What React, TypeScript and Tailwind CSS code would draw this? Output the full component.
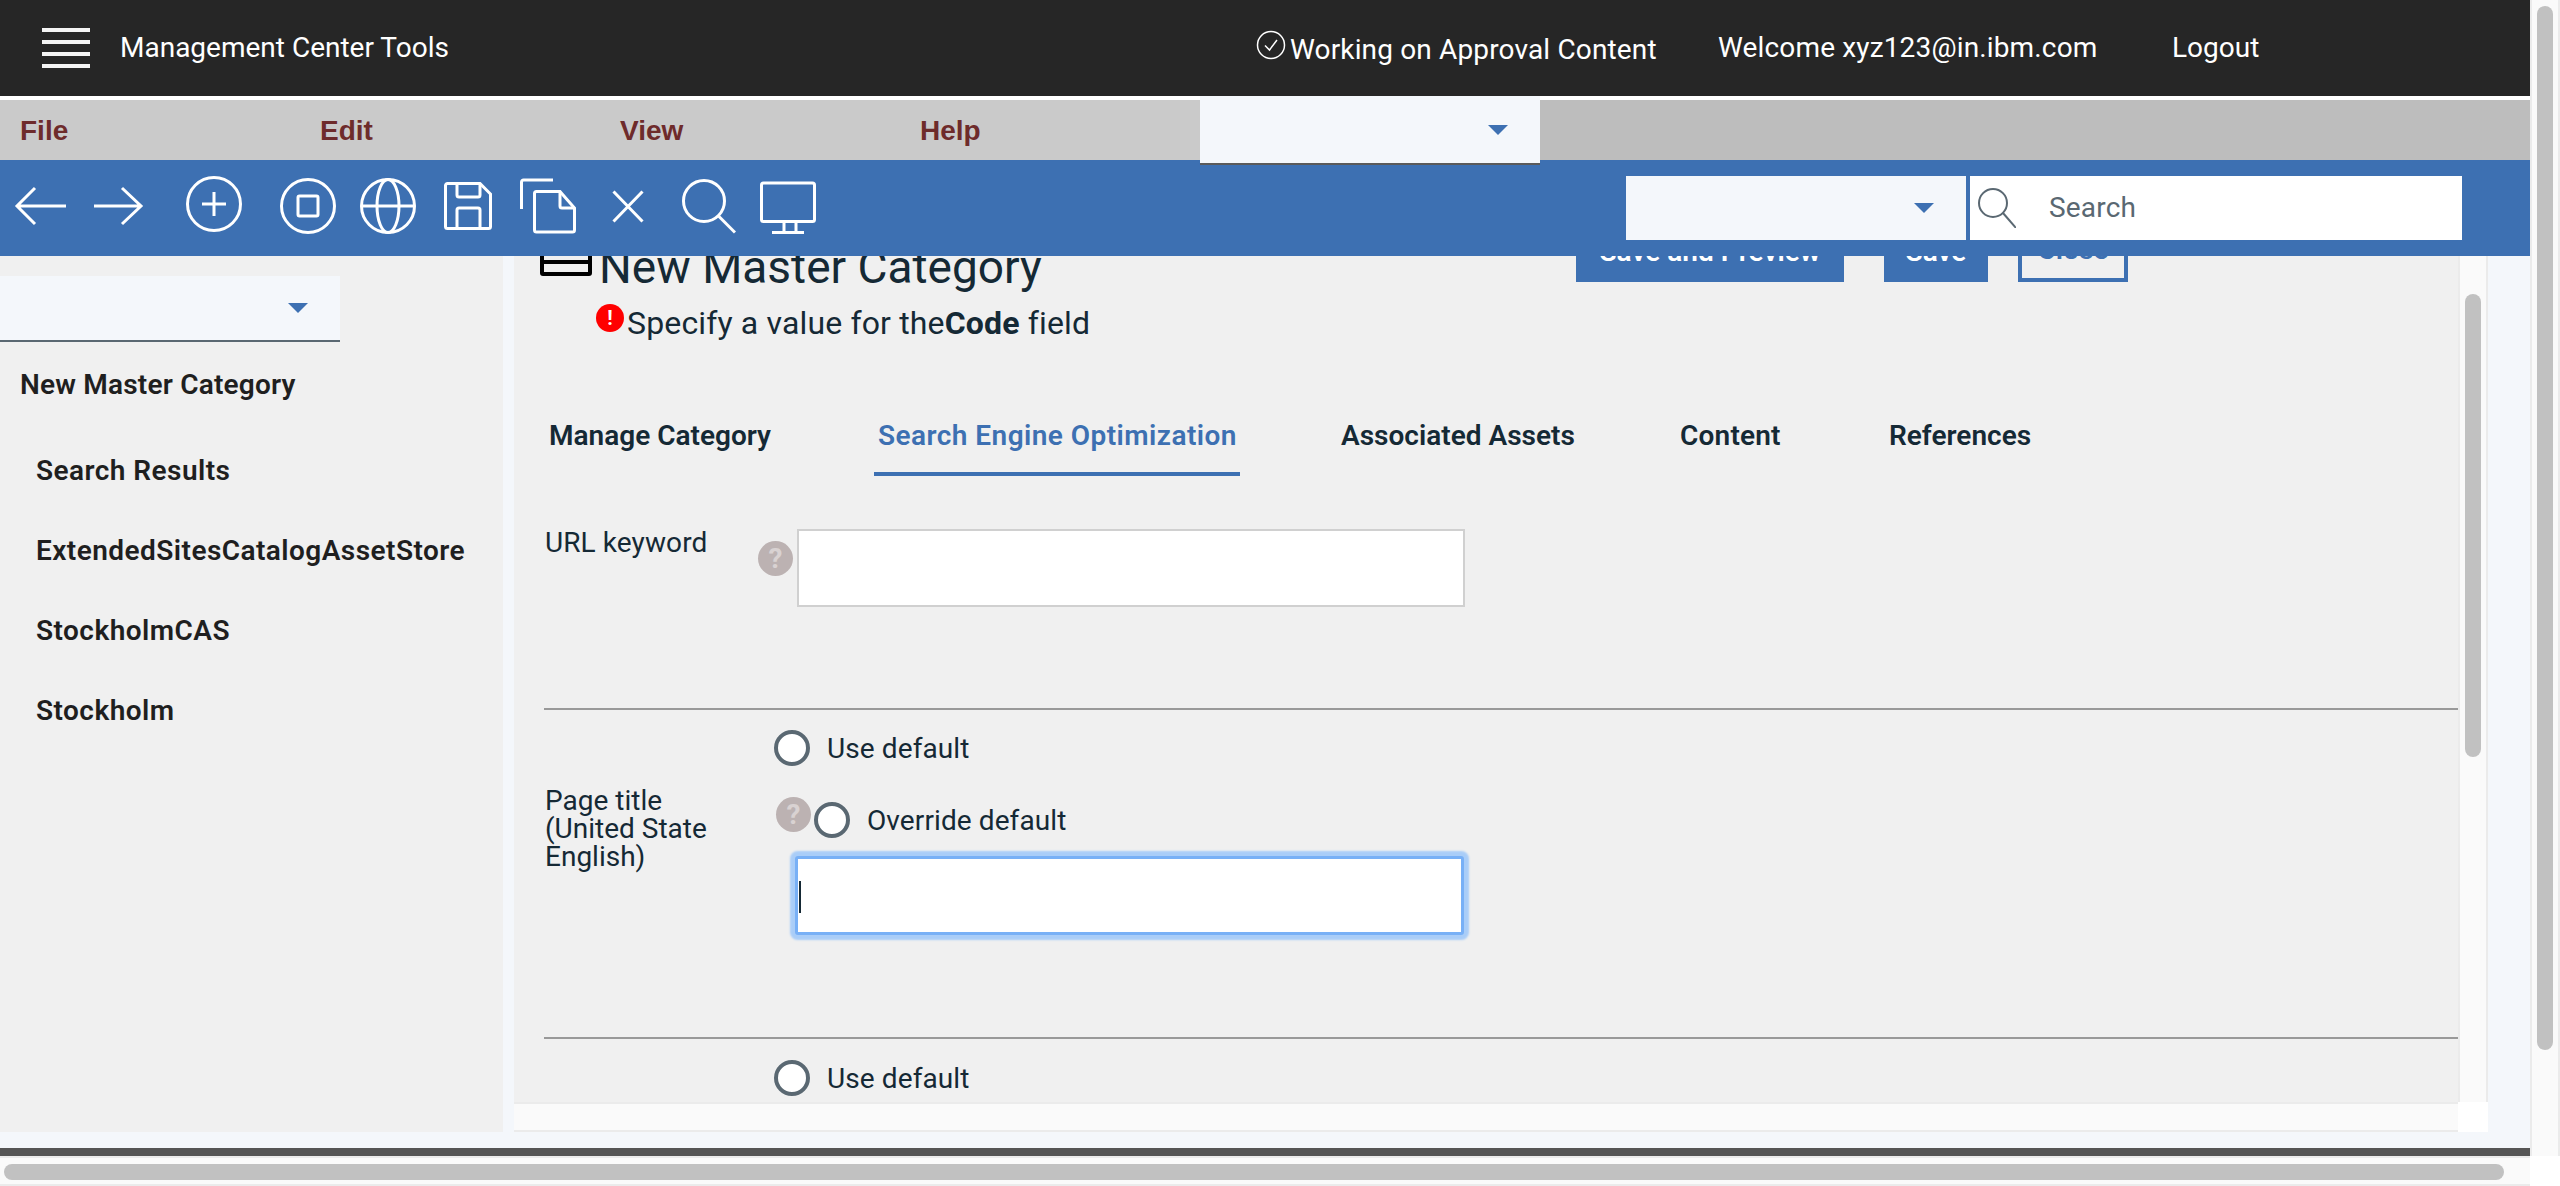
const plex = 'font-["Roboto",sans-serif]'

function Caret({ className }: { className: string }) {
  return (
    <svg className={className} width="20" height="10" viewBox="0 0 20 10">
      <polygon points="0,0 20,0 10,10" fill="#3d70b2" />
    </svg>
  )
}

function Radio({ label }: { label: string }) {
  return (
    <label className="flex items-center gap-[17px]">
      <input type="radio" className="w-9 h-9 shrink-0 appearance-none rounded-full border-4 border-[#5a6872] bg-white" />
      <span className="mt-[2px] text-[28px] leading-7 tracking-[0.1px] text-[#152935]">{label}</span>
    </label>
  )
}

function Help({ className }: { className: string }) {
  return (
    <div className={`w-[35px] h-[35px] shrink-0 rounded-full bg-[#bcb2b2] flex items-center justify-center text-[28px] font-bold text-[#d9d2d2] ${className}`}>?</div>
  )
}

function ToolIcon({ w, ml, children }: { w: number; ml: string; children: React.ReactNode }) {
  return (
    <svg className={`shrink-0 ${ml}`} width={w} height="64" viewBox={`0 0 ${w} 64`} fill="none" stroke="#fff" strokeWidth="3">
      {children}
    </svg>
  )
}

function Toolbar() {
  return (
    <div className="h-24 bg-[#3d70b2] flex items-center">
      <div className="flex">
        <ToolIcon w={52} ml="ml-[14px]"><path d="M3 30H52M21 12L3 30L21 48" /></ToolIcon>
        <ToolIcon w={50} ml="ml-[28px]"><path d="M0 30H47M28 12L47 30L28 48" /></ToolIcon>
        <ToolIcon w={56} ml="ml-[42px]">
          <circle cx="28" cy="28" r="26.5" />
          <path d="M16 28H40M28 16V40" />
        </ToolIcon>
        <ToolIcon w={56} ml="ml-[38px]">
          <circle cx="28" cy="30" r="26.5" />
          <rect x="18" y="20" width="20" height="20" rx="1.5" />
        </ToolIcon>
        <ToolIcon w={56} ml="ml-[24px]">
          <circle cx="28" cy="30" r="26.5" />
          <ellipse cx="28" cy="30" rx="11" ry="26.5" />
          <path d="M1.5 30H54.5" />
        </ToolIcon>
        <ToolIcon w={48} ml="ml-[28px]">
          <path d="M3.5 7.5H36L46.5 18V50.5A2 2 0 0 1 44.5 52.5H3.5A2 2 0 0 1 1.5 50.5V9.5A2 2 0 0 1 3.5 7.5Z" />
          <path d="M13 7.5V19A2 2 0 0 0 15 21H34A2 2 0 0 0 36 19V7.5" />
          <path d="M13 52.5V34A2 2 0 0 1 15 32H34A2 2 0 0 1 36 34V52.5" />
        </ToolIcon>
        <ToolIcon w={56} ml="ml-[28px]">
          <path d="M1.5 33V6A2 2 0 0 1 3.5 4H33" />
          <path d="M16.5 15.5H40L54.5 32V54A2 2 0 0 1 52.5 56H16.5A2 2 0 0 1 14.5 54V17.5A2 2 0 0 1 16.5 15.5Z" />
          <path d="M40 15.5V30A2 2 0 0 0 42 32H54.5" />
        </ToolIcon>
        <ToolIcon w={32} ml="ml-[36px]"><path d="M1.5 15.5L30.5 45.5M30.5 15.5L1.5 45.5" /></ToolIcon>
        <ToolIcon w={54} ml="ml-[38px]">
          <circle cx="22" cy="25" r="20.5" />
          <path d="M36.5 40L53 56.5" />
        </ToolIcon>
        <ToolIcon w={56} ml="ml-[24px]">
          <rect x="1.5" y="7" width="53" height="38.5" rx="2" />
          <path d="M24 45.5V56M36 45.5V56M12 56.5H44" />
        </ToolIcon>
      </div>
      <div className="ml-[810px] w-[340px] h-16 bg-[#f4f7fb] flex items-center justify-end pr-[32px]">
        <Caret className="" />
      </div>
      <div className="ml-1 w-[492px] h-16 bg-white flex items-center">
        <svg className="ml-[8px] shrink-0" width="38" height="40" viewBox="0 0 38 40" fill="none" stroke="#5a6872" strokeWidth="2">
          <circle cx="15" cy="15" r="14" />
          <path d="M25 25L38 40" />
        </svg>
        <span className={`ml-[33px] text-[28px] tracking-[0.2px] text-[#5a6872]`}>Search</span>
      </div>
    </div>
  )
}

function Sidebar() {
  return (
    <div className="w-[503px] h-[876px] bg-[#f0f0f0] pt-5 shrink-0">
      <div className="w-[340px] h-[66px] bg-[#f4f7fb] border-b-2 border-[#5a6872] flex items-center justify-end pr-[32px]">
        <Caret className="" />
      </div>
      <div className="pl-5 pt-[29px] text-[28px] leading-7 tracking-[0.2px] font-semibold text-[#1f1f1f]">New Master Category</div>
      <div className="pl-9 pt-[58px] flex flex-col gap-[52px] text-[28px] leading-7 tracking-[0.45px] font-semibold text-[#1f1f1f]">
        <div>Search Results</div>
        <div>ExtendedSitesCatalogAssetStore</div>
        <div>StockholmCAS</div>
        <div>Stockholm</div>
      </div>
    </div>
  )
}

function Tabs() {
  return (
    <div className="flex mt-[78px] ml-[35px] h-[54px] text-[28px] leading-7 font-semibold text-[#152935]">
      <div className="w-[325px]">Manage Category</div>
      <div className="w-[366px] pl-1 h-[54px] border-b-4 border-[#3d70b2] text-[#3d70b2] tracking-[0.45px]">Search Engine Optimization</div>
      <div className="ml-[101px] w-[339px]">Associated Assets</div>
      <div className="w-[209px] tracking-[0.2px]">Content</div>
      <div>References</div>
    </div>
  )
}

function Editor() {
  return (
    <div className="flex-1 min-w-0 overflow-hidden bg-[#f0f0f0] h-[846px]">
      {/* page is scrolled a little, so the title row runs under the toolbar */}
      <div className="-mt-[54px] flex items-start h-[134px]">
        <div className="ml-[26px] w-[52px] h-[52px] mt-[22px] border-4 border-black rounded-[3px] flex flex-col justify-end pb-[8px] shrink-0">
          <div className="h-1 bg-black" />
        </div>
        <div className="ml-[7px] mt-[39px] text-[46px] leading-[52px] text-[#152935]">New Master Category</div>
        <div className="ml-auto mr-[330px] flex text-[28px] font-semibold">
          <div className="w-[268px] h-20 pt-[20px] bg-[#3d70b2] text-white flex items-center justify-center">Save and Preview</div>
          <div className="ml-10 w-[104px] h-20 pt-[20px] bg-[#3d70b2] text-white flex items-center justify-center">Save</div>
          <div className="ml-[30px] w-[110px] h-20 pt-[16px] border-4 border-[#3d70b2] text-[#3d70b2] flex items-center justify-center">Close</div>
        </div>
      </div>
      <div className="flex items-start ml-[82px] -mt-[32px] h-[40px]">
        <div className="w-7 h-7 rounded-full bg-[#ff0000] flex items-center justify-center text-[20px] leading-none font-bold text-white shrink-0">!</div>
        <div className="ml-[3px] mt-[1px] text-[32px] leading-9 tracking-[0.15px] text-[#152935]">Specify a value for the<b>Code</b> field</div>
      </div>
      <Tabs />
      <div className="flex items-start mt-[53px] ml-[31px] h-[78px]">
        <div className="w-[213px] text-[28px] leading-7 tracking-[0.1px] text-[#152935]">URL keyword</div>
        <Help className="mt-3" />
        <input className="ml-1 w-[668px] h-[78px] bg-white border-2 border-[#d0d0d0]" />
      </div>
      <div className="mt-[101px] ml-[30px] h-[2px] bg-[#999]" />
      <div className="flex mt-[20px] ml-[31px]">
        <div className="w-[229px] pt-[57px] text-[28px] leading-7 text-[#152935]">
          Page title<br />(United State<br />English)
        </div>
        <div>
          <Radio label="Use default" />
          <div className="flex items-start mt-[31px] ml-[2px]">
            <Help className="" />
            <div className="mt-[5px] ml-[3px]"><Radio label="Override default" /></div>
          </div>
          <div className="relative mt-[18px] ml-[21px] w-[669px] h-[79px] bg-white border-[3px] border-[#78b0f6] shadow-[0_0_2px_5px_#a9cdf8] rounded-[3px]">
            <div className="absolute left-[1px] top-[22px] w-[2px] h-8 bg-[#152935]" />
          </div>
        </div>
      </div>
      <div className="mt-[102px] ml-[30px] h-[2px] bg-[#999]" />
      <div className="mt-[21px] ml-[260px]"><Radio label="Use default" /></div>
    </div>
  )
}

export default function App() {
  return (
    <div className={`w-[2560px] h-[1186px] overflow-hidden flex flex-col bg-white ${plex}`}>
      <div className="flex h-[1156px]">
        <div className="w-[2530px] flex flex-col">
          <div className="h-24 bg-[#262626] flex items-center text-[28px] text-white shrink-0">
            <div className="ml-[42px] w-12 flex flex-col gap-2">
              <div className="h-1 bg-[#f4f4f4]" />
              <div className="h-1 bg-[#f4f4f4]" />
              <div className="h-1 bg-[#f4f4f4]" />
              <div className="h-1 bg-[#f4f4f4]" />
            </div>
            <span className="ml-[30px] w-[1136px]">Management Center Tools</span>
            <svg className="-mt-[6px] shrink-0" width="30" height="30" viewBox="0 0 30 30" fill="none" stroke="#fff" strokeWidth="1.5">
              <circle cx="15" cy="15" r="13.5" />
              <path d="M9 15.5L13.5 20L21 10" />
            </svg>
            <span className="ml-1 mt-[4px] w-[428px] tracking-[0.15px]">Working on Approval Content</span>
            <span className="w-[454px] tracking-[0.15px]">Welcome xyz123@in.ibm.com</span>
            <span>Logout</span>
          </div>
          <div className="h-1 bg-white shrink-0" />
          <div className="h-[60px] shrink-0 flex bg-[#bdbdbd] relative z-10">
            <div className="w-[1200px] bg-[#cacaca] flex font-['Liberation_Sans',sans-serif] text-[28px] font-bold text-[#6e2b2b] pt-[10px]">
              <span className="ml-5 w-[300px]">File</span>
              <span className="w-[300px]">Edit</span>
              <span className="w-[300px]">View</span>
              <span>Help</span>
            </div>
            <div className="-mt-1 w-[340px] h-[69px] bg-[#f4f7fb] border-b-2 border-[#5a5a5a] flex items-center justify-end pr-[32px] relative">
              <Caret className="" />
            </div>
          </div>
          <Toolbar />
          <div className="flex-1 min-h-0 bg-[#f4f7fb] flex">
            <Sidebar />
            <div className="ml-[11px] w-[1974px] flex flex-col h-[876px]">
              <div className="flex h-[846px]">
                <Editor />
                <div className="w-[30px] h-[846px] bg-[#fafafa] border-x-2 border-[#ebebeb] shrink-0 pt-[38px] flex justify-center">
                  <div className="w-4 h-[463px] rounded-full bg-[#c1c1c1]" />
                </div>
              </div>
              <div className="flex h-[30px]">
                <div className="flex-1 bg-[#fafafa] border-y-2 border-[#ebebeb]" />
                <div className="w-[30px] bg-white" />
              </div>
            </div>
          </div>
          <div className="h-2 bg-[#555] shrink-0" />
        </div>
        <div className="w-[30px] bg-[#fafafa] border-x-2 border-[#ebebeb] pt-[6px] flex justify-center">
          <div className="w-4 h-[1044px] rounded-full bg-[#c1c1c1]" />
        </div>
      </div>
      <div className="flex h-[30px]">
        <div className="w-[2530px] bg-[#fafafa] border-y-2 border-[#ebebeb] pt-[6px] pl-1">
          <div className="w-[2500px] h-4 rounded-full bg-[#c1c1c1]" />
        </div>
        <div className="w-[30px] bg-white" />
      </div>
    </div>
  )
}
